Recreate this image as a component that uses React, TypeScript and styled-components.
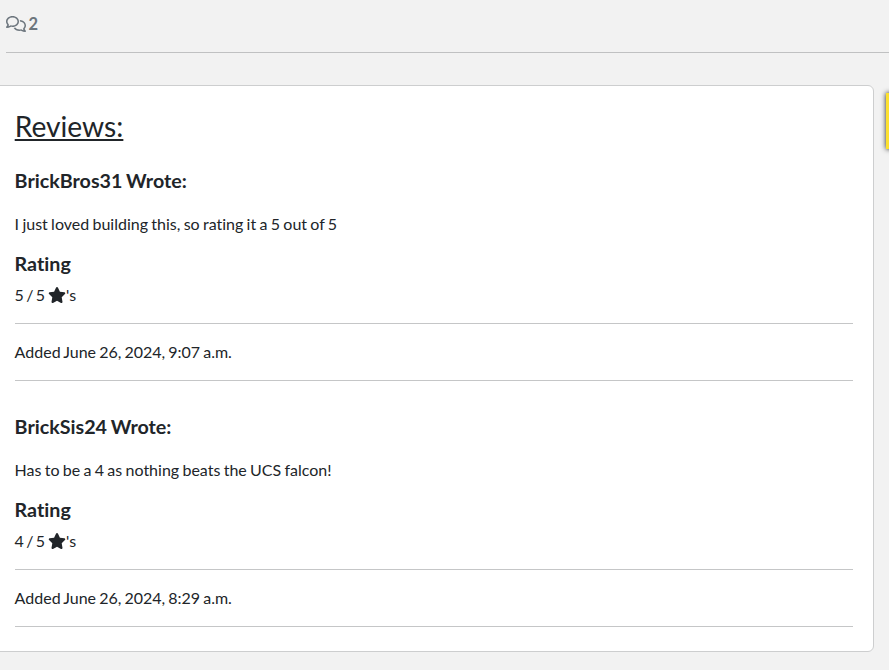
import React from "react";
import styled, { createGlobalStyle } from "styled-components";
import { FaRegComments, FaStar } from "react-icons/fa6";

const Global = createGlobalStyle`
  *, *::before, *::after { box-sizing: border-box; }
  body {
    margin: 0;
    background: #f2f2f2;
    color: #212529;
    font: 400 16px/24px Lato, sans-serif;
    font-variant-ligatures: none;
    word-spacing: -1px;
    overflow: hidden;
  }
`;

const Page = styled.main`
  display: flex;
  flex-direction: column;
  height: 670px;
  overflow: hidden;
`;

const CommentBar = styled.header`
  display: flex;
  align-items: center;
  gap: 3px;
  height: 53px;
  margin-left: 6px;
  padding-bottom: 5px;
  border-bottom: 1px solid #c0c1c2;
  color: #6c757d;
  font-size: 16.5px;
  font-weight: 700;
  svg { width: 20px; height: 16px; margin-left: -0.5px; }
`;

const Content = styled.div`
  display: flex;
  align-items: flex-start;
  gap: 12px;
  margin-top: 32px;
`;

const Card = styled.section`
  flex: 0 0 884px;
  height: 567px;
  margin-left: -10px;
  padding: 23px 20px 0 24px;
  background: #fff;
  border: 1px solid #cdcecf;
  border-radius: 6px;
`;

const SideCard = styled.aside`
  flex: 0 0 40px;
  height: 56px;
  margin-top: 8px;
  background: #fce02f;
  box-shadow: 0 0 5px #222;
`;

const Title = styled.h2`
  margin: 0 0 0 -0.3px;
  font-size: 28.2px;
  font-weight: 400;
  line-height: 34px;
  text-decoration: underline;
`;

const Review = styled.article`
  margin-top: 26px;
  & + & { margin-top: 34px; }
`;

const Heading = styled.h3`
  margin: 0 0 0 -0.4px;
  font-size: 19.7px;
  font-weight: 700;
  line-height: 24px;
`;

const Body = styled.p`
  margin: 19px 0 16px -0.4px;
  word-spacing: -0.8px;
`;

const Rating = styled.p`
  display: flex;
  align-items: center;
  margin: 7px 0 16px -0.4px;
  word-spacing: -1.8px;
  svg { width: 18px; height: 16px; margin-left: 3px; }
`;

const Added = styled.p`
  margin: 0;
  padding: 16px 0;
  border: 1px solid #c5c6c7;
  border-width: 1px 0;
  text-indent: -0.4px;
`;

const reviews = [
  { author: "BrickBros31", text: "I just loved building this, so rating it a 5 out of 5", rating: 5, added: "June 26, 2024, 9:07 a.m." },
  { author: "BrickSis24", text: "Has to be a 4 as nothing beats the UCS falcon!", rating: 4, added: "June 26, 2024, 8:29 a.m." },
];

export default function App() {
  return (
    <Page>
      <Global />
      <CommentBar><FaRegComments /><span>2</span></CommentBar>
      <Content>
        <Card>
          <Title>Reviews:</Title>
          {reviews.map((r) => (
            <Review key={r.author}>
              <Heading>{r.author} Wrote:</Heading>
              <Body>{r.text}</Body>
              <Heading>Rating</Heading>
              <Rating><span>{r.rating} / 5</span><FaStar /><span>'s</span></Rating>
              <Added>Added {r.added}</Added>
            </Review>
          ))}
        </Card>
        <SideCard />
      </Content>
    </Page>
  );
}
